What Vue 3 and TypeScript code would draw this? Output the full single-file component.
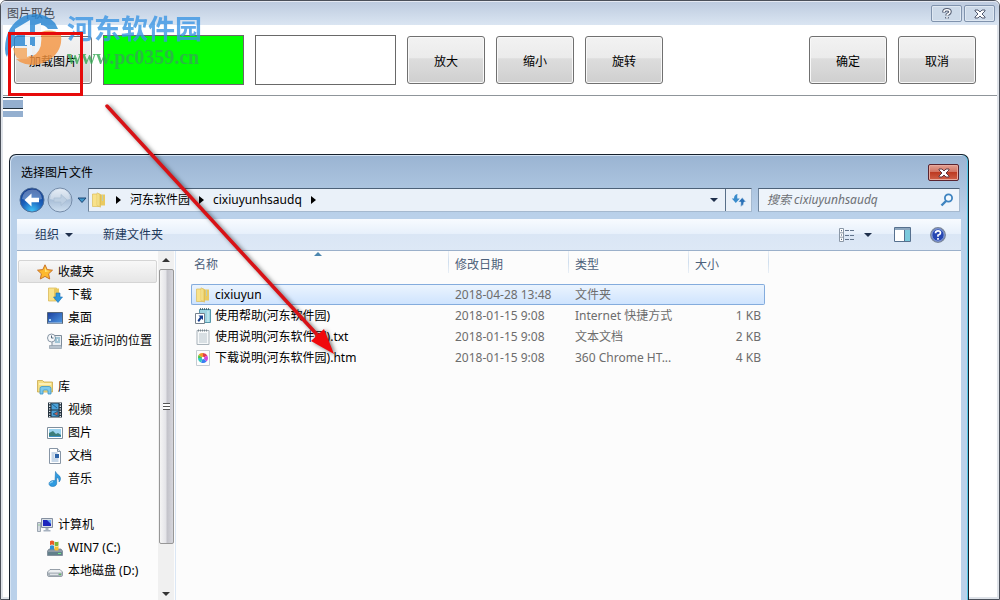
<script setup lang="ts">
import { ref } from 'vue'

interface NavItem {
  label: string
  icon: string
  root?: boolean
}
interface FileRow {
  name: string
  icon: string
  date: string
  type: string
  size: string
}

const groups: NavItem[][] = [
  [
    { label: '收藏夹', icon: 'star', root: true },
    { label: '下载', icon: 'download' },
    { label: '桌面', icon: 'desktop' },
    { label: '最近访问的位置', icon: 'recent' },
  ],
  [
    { label: '库', icon: 'library', root: true },
    { label: '视频', icon: 'video' },
    { label: '图片', icon: 'picture' },
    { label: '文档', icon: 'document' },
    { label: '音乐', icon: 'music' },
  ],
  [
    { label: '计算机', icon: 'computer', root: true },
    { label: 'WIN7 (C:)', icon: 'windisk' },
    { label: '本地磁盘 (D:)', icon: 'disk' },
  ],
]

const files: FileRow[] = [
  { name: 'cixiuyun', icon: 'folder', date: '2018-04-28 13:48', type: '文件夹', size: '' },
  { name: '使用帮助(河东软件园)', icon: 'shortcut', date: '2018-01-15 9:08', type: 'Internet 快捷方式', size: '1 KB' },
  { name: '使用说明(河东软件园).txt', icon: 'text', date: '2018-01-15 9:08', type: '文本文档', size: '2 KB' },
  { name: '下载说明(河东软件园).htm', icon: 'chrome', date: '2018-01-15 9:08', type: '360 Chrome HT...', size: '4 KB' },
]

const activeNav = ref('收藏夹')
const selected = ref('cixiuyun')
const query = ref('')
</script>

<template>
  <svg class="defs" aria-hidden="true">
    <defs>
      <linearGradient id="gold" x1="0" x2="1" y1="0" y2="0">
        <stop offset="0" stop-color="#fbeea6" /><stop offset="1" stop-color="#e5c85c" />
      </linearGradient>
      <linearGradient id="screen" x1="0" x2="1" y1="0" y2="1">
        <stop offset="0" stop-color="#1c3f9c" /><stop offset="1" stop-color="#4f9be6" />
      </linearGradient>
      <radialGradient id="orb" cx=".5" cy=".95" r=".9">
        <stop offset="0" stop-color="#3fc3f7" /><stop offset=".5" stop-color="#1b62bd" /><stop offset="1" stop-color="#123a8c" />
      </radialGradient>
      <linearGradient id="orbOff" x1="0" x2="0" y1="0" y2="1">
        <stop offset="0" stop-color="#dce7f3" /><stop offset=".5" stop-color="#a9bfd8" /><stop offset="1" stop-color="#cfe0f0" />
      </linearGradient>
    </defs>
    <symbol id="star" viewBox="0 0 16 16"><path d="M8 .8 10.2 5.6 15.5 6.2 11.6 9.8 12.7 15 8 12.4 3.3 15 4.4 9.8.5 6.2 5.8 5.6Z" fill="#fdb92e" stroke="#c9742a" /><path d="M8 3 9.4 6.6 13 7 8 8Z" fill="#ffe37c" /></symbol>
    <symbol id="folder" viewBox="0 0 16 16"><path d="M1.500 2h7v12.500h-7z" fill="#f8e28a" stroke="#d9b548" stroke-width=".6" /><path d="M8 2.500h6v11H8z" fill="#e9ca62" /><path d="M6 .8 9.500 2.500v12.700L6 13.500z" fill="url(#gold)" stroke="#d8b54e" stroke-width=".5" /><path d="M11.500 3v6" stroke="#b9cdbb" /></symbol>
    <symbol id="download" viewBox="0 0 16 16"><path d="M1.500 1h8v13h-8z" fill="#f8e28a" stroke="#d5b24a" stroke-width=".7" /><path d="M7 1.500h5v12H7z" fill="#e7c65c" /><path d="M9 6h4v4h2.500L11 15.500 6.500 10H9z" fill="#2e96dd" stroke="#1870b5" stroke-width=".6" /></symbol>
    <symbol id="desktop" viewBox="0 0 16 16"><path d="M.5 2.500h15v11H.5z" fill="url(#screen)" stroke="#55667a" /><path d="M1 13h14" stroke="#b7c8db" /><path d="M2 9h2v2H2z" fill="#a9d9f7" /></symbol>
    <symbol id="recent" viewBox="0 0 16 16"><path d="M5 2.500h9.500v11H5z" fill="#e9eef3" stroke="#7d8b99" /><circle cx="4.500" cy="5" r="4" fill="#f6f8fa" stroke="#8896a5" /><path d="M4.500 2.500V5h2" stroke="#55687b" fill="none" /><path d="M8 5h5M8 7h2m1 0h2M8 9h5" stroke="#5b9ab5" /><path d="M2.500 12.500h12v3h-12z" fill="#b6c2cd" stroke="#8291a0" stroke-width=".6" /></symbol>
    <symbol id="library" viewBox="0 0 16 16"><path d="M.5 13V1.500h5L7 3h8.500v10z" fill="#f4de83" stroke="#caa84a" stroke-width=".8" /><path d="M2 5h12" stroke="#fff6c7" stroke-width="1.500" /><path d="M3 15V9.500Q3 7.500 5 7.500h7q2 0 2 2V15h-3v-3q0-1-1-1H7q-1 0-1 1v3z" fill="#7cc9ec" stroke="#3b96c9" stroke-width=".8" /></symbol>
    <symbol id="video" viewBox="0 0 16 16"><path d="M1 .5h14v15H1z" fill="#25333f" /><path d="M4.500 1.500h7v6h-7zM4.500 8.500h7v6h-7z" fill="#4ca1d8" /><path d="M6 12 11 9v5zM5 2l5 4" fill="#bb6155" stroke="#1d638f" /><path d="M2.700 1v14M13.300 1v14" stroke="#e6edf2" stroke-width="1.300" stroke-dasharray="1.300 1.300" /></symbol>
    <symbol id="picture" viewBox="0 0 16 16"><path d="M.5 2.500h15v11H.5z" fill="#fff" stroke="#7f8f9d" /><path d="M2 4h12v8H2z" fill="#9bd3ef" /><path d="M2 8l4-2 3 3 2-1 3 2v2H2z" fill="#3b7d7a" /><path d="M2 11h12v1H2z" fill="#3a8fc4" /></symbol>
    <symbol id="document" viewBox="0 0 16 16"><path d="M2.500.5h8l3 3v12h-11z" fill="#fff" stroke="#8795a5" /><path d="M10.500.5v3h3" fill="#dde6ee" stroke="#8795a5" /><path d="M4.500 5h6M4.500 7h3M4.500 9h3M4.500 11h7M4.500 13h7" stroke="#8fb0d2" /><path d="M8 6h4v4H8z" fill="#2d64a8" /></symbol>
    <symbol id="music" viewBox="0 0 16 16"><path d="M8.500.5c.5 3 5 3.500 5 7 0 2-1 3-1.500 3.500.5-3-1-4-2.300-4.500v5.700c0 2-1.700 3.300-4 3.300S2 14.300 2 12.700s2-3.200 4.700-3.200l1.300.3z" fill="#2f9be0" stroke="#1b73b5" stroke-width=".6" /><path d="M3 12.500q1-2 3-1.800" stroke="#a8e0fa" fill="none" /></symbol>
    <symbol id="computer" viewBox="0 0 16 16"><path d="M4.500 1.500h11v9h-11z" fill="#d9dfe6" stroke="#8590a0" /><path d="M6 3h8v6H6z" fill="#1d25bd" /><path d="M10 3h4v4z" fill="#6faaf5" /><path d="M8.500 11h3v2h-3zM6.500 13h7v1.500h-7z" fill="#a6b1bf" /><path d="M.5 5.500h3v9h-3z" fill="#d3dae1" stroke="#8994a1" stroke-width=".8" /><path d="M1.500 8h1" stroke="#5cb85c" /></symbol>
    <symbol id="windisk" viewBox="0 0 16 16"><path d="M2 9h12l1.500 2v4.500H.5V11z" fill="#8c9aa6" stroke="#697987" stroke-width=".7" /><path d="M1 12h14v3H1z" fill="#62808b" /><path d="M11 13.500h3" stroke="#75ed87" /><path d="M3 1.200q2-1.200 4 0v4q-2-1.200-4 0z" fill="#eb5a28" /><path d="M7.500 1.500q2 1.200 4 0v4q-2 1.200-4 0z" fill="#7db53a" /><path d="M3 5.800q2-1.200 4 0v4q-2-1.200-4 0z" fill="#2e8fd4" /><path d="M7.500 6q2 1.200 4 0v4q-2 1.200-4 0z" fill="#f6c02e" /></symbol>
    <symbol id="disk" viewBox="0 0 16 16"><path d="M3 6.500h10L15.500 9v3q0 1.500-1.500 1.500H2Q.5 13.500.5 12V9z" fill="#edf0f2" stroke="#7f8a94" stroke-width=".8" /><path d="M1 9.500h14V12q0 1-1 1H2q-1 0-1-1z" fill="#a9b2ba" /><path d="M3 11.300h8" stroke="#eef1f3" /><path d="M12 11.300h2" stroke="#45c445" /></symbol>
    <symbol id="shortcut" viewBox="0 0 16 16"><path d="M4.500 1.500h11v13h-11z" fill="#9dd5e2" stroke="#5697ab" /><path d="M5 1h10" stroke="#35535f" stroke-width="1.500" stroke-dasharray="1 1" /><path d="M13 3v11" stroke="#d6f1f5" /><path d="M.5 5.500h9v10h-9z" fill="#fff" stroke="#76828d" /><path d="M3.500 7.500H8V12L6.500 10.500 4 14 2.500 12.500 5 9z" fill="#173f8f" /></symbol>
    <symbol id="text" viewBox="0 0 16 16"><path d="M2 1.500h12v14H2z" fill="#f7f9fa" stroke="#a9b3ba" /><path d="M3 1.500h10" stroke="#7c878d" stroke-width="2" stroke-dasharray="1 1" /><path d="M4 5h8M4 7h8M4 9h8M4 11h8M4 13h8" stroke="#b9c5cc" /></symbol>
    <symbol id="chrome" viewBox="0 0 16 16"><path d="M1.500.5h13v15h-13z" fill="#fdfdfd" stroke="#c5ccd3" /><path d="M8 8 3.500 5Q5 2.500 8 3z" fill="#f29b2f" /><path d="M8 8V3q3 0 4.300 2.500z" fill="#e23d4c" /><path d="m8 8 4.300-2.500Q14 9 11.500 11.500z" fill="#d04be0" /><path d="m8 8 3.500 3.500Q9 14 6 12.500z" fill="#3a7ef2" /><path d="m8 8-2 4.500Q3 11 3 8z" fill="#31c8c0" /><path d="M8 8H3q0-2 .5-3z" fill="#52c444" /><circle cx="8" cy="8" r="1.200" fill="#fff" /></symbol>
  </svg>

  <main class="window">
    <header class="titlebar">
      <h1>图片取色</h1>
      <div class="caption">
        <button aria-label="帮助"><svg width="12" height="14" viewBox="0 0 12 14"><path d="M3 5.500V4.800q0-2 3-2t3 2q0 1.200-1.500 2Q6 7.500 6 8.500M6 10v1.500" fill="none" stroke="#525b70" stroke-width="3.600" /><path d="M3 5V4.800q0-2 3-2t3 2q0 1.200-1.500 2Q6 7.500 6 8.500M6 10v1.500" fill="none" stroke="#fff" stroke-width="1.500" /></svg></button>
        <button aria-label="关闭"><svg width="12" height="10" viewBox="0 0 12 10"><path d="M1 1h3l2 2 2-2h3v1L8 5l3 3v1H8L6 7 4 9H1V8l3-3-3-3z" fill="#fff" stroke="#525b70" /></svg></button>
      </div>
    </header>

    <section class="toolbar">
      <button class="push">加载图片</button>
      <div class="swatch green"></div>
      <div class="swatch"></div>
      <button class="push">放大</button>
      <button class="push">缩小</button>
      <button class="push">旋转</button>
      <span class="grow"></span>
      <button class="push">确定</button>
      <button class="push">取消</button>
    </section>
    <div class="stripes"></div>
  </main>

  <section class="dialog" aria-label="选择图片文件">
    <header class="dialog-title">
      <h2>选择图片文件</h2>
      <button class="close" aria-label="关闭"><svg width="12" height="10" viewBox="0 0 12 10"><path d="M1 1h3l2 2 2-2h3v1L8 5l3 3v1H8L6 7 4 9H1V8l3-3-3-3z" fill="#fff" stroke="#5f3a44" /></svg></button>
    </header>

    <div class="address-row">
      <button class="orb" aria-label="后退"><svg width="26" height="26" viewBox="0 0 26 26"><circle cx="13" cy="13" r="12" fill="url(#orb)" stroke="#4b6d98" /><path d="M3 12Q4 3 13 2.500T23 12Q13 15 3 12" fill="#fff" opacity=".3" /><path d="m5.500 13 7-6.500v4.300h7.500v4.400h-7.500v4.300z" fill="#fff" /></svg></button>
      <button class="orb" aria-label="前进"><svg width="26" height="26" viewBox="0 0 26 26"><circle cx="13" cy="13" r="12" fill="url(#orbOff)" stroke="#758ca9" /><path d="M3 12Q4 3 13 2.500T23 12Q13 15 3 12" fill="#fff" opacity=".35" /><path d="m20 13-6-5.500v3.500H7v4h7v3.500z" fill="#bdcfe2" stroke="#a9bdd3" stroke-width=".7" /></svg></button>
      <button class="recent" aria-label="最近的页面"><svg width="10" height="7" viewBox="0 0 10 7"><path d="M1 1h8L5 5.500z" fill="#3f97cb" stroke="#1d4774" /></svg></button>
      <nav class="address" aria-label="路径">
        <svg width="16" height="18"><use href="#folder" /></svg>
        <i class="tri right"></i>
        <a href="#">河东软件园</a>
        <i class="tri right"></i>
        <a href="#">cixiuyunhsaudq</a>
        <i class="tri right"></i>
        <span class="grow"></span>
        <button aria-label="历史路径"><i class="tri down"></i></button>
        <button class="refresh" aria-label="刷新"><svg width="16" height="16" viewBox="0 0 16 16"><path d="M6.500 2Q3 2.500 3 6.500H.8L4.800 11l4-4.500H6.300Q6 4 6.500 2Z" fill="#3a8ccc" /><path d="M9.500 14.500q3.500-.5 3.500-4.500h2.200l-4-4.500-4 4.500h2.500q.3 2.500-.2 4.500Z" fill="#2b72b8" stroke="#eaf1f9" stroke-width=".6" /></svg></button>
      </nav>
      <label class="search">
        <input v-model="query" type="text" placeholder="搜索 cixiuyunhsaudq" aria-label="搜索" />
        <svg width="14" height="14" viewBox="0 0 14 14"><circle cx="8.500" cy="5" r="3.600" fill="#f2f9ff" stroke="#3e83c0" stroke-width="1.800" /><path d="m6 8-4.500 4.500" stroke="#3e83c0" stroke-width="2.400" /></svg>
      </label>
    </div>

    <div class="commands">
      <button>组织 <i class="tri down"></i></button>
      <button>新建文件夹</button>
      <span class="grow"></span>
      <button class="view" aria-label="更改视图"><svg width="17" height="14" viewBox="0 0 17 14"><path d="M.5.500h4v13h-4zM.5 4.800h4M.5 9.200h4" fill="#fff" stroke="#8a97a6" /><path d="M2 2.700h1M2 7h1M2 11.300h1" stroke="#334b69" /><path d="M6 2.500h10M6 7.500h10M6 11.500h10" stroke="#63758c" stroke-dasharray="4 1" /></svg><i class="tri down"></i></button>
      <button aria-label="预览窗格"><svg width="17" height="15" viewBox="0 0 17 15"><path d="M.5.500h16v14H.5z" fill="#fff" stroke="#56708e" /><path d="M1 2h15" stroke="#8da6be" stroke-width="2" /><path d="M11 3h5v11h-5z" fill="#7bc9dc" /><path d="M10.500 3v11" stroke="#56708e" /></svg></button>
      <button aria-label="获取帮助"><svg width="16" height="16" viewBox="0 0 16 16"><circle cx="8" cy="8" r="7.300" fill="#2647b2" stroke="#7c8798" stroke-width="1.300" /><circle cx="8" cy="8" r="6.200" fill="none" stroke="#b5c7e8" stroke-width=".8" /><path d="M5.500 6.300q0-2.500 2.500-2.500t2.500 2.200Q10.500 7.400 8 8.200v1.600M8 11v1.800" stroke="#fff" stroke-width="1.700" fill="none" /></svg></button>
    </div>

    <div class="body">
      <nav class="tree" aria-label="导航窗格">
        <ul v-for="(group, g) in groups" :key="g">
          <li v-for="item in group" :key="item.label">
            <button :class="{ root: item.root, active: item.label === activeNav }" @click="activeNav = item.label">
              <svg width="16" height="16"><use :href="'#' + item.icon" /></svg>{{ item.label }}
            </button>
          </li>
        </ul>
      </nav>
      <div class="scroll">
        <i class="tri up"></i>
        <div class="thumb"><span></span></div>
        <div class="rest"></div>
        <i class="tri down"></i>
      </div>
      <div class="files">
        <table>
          <thead>
            <tr><th class="name">名称<i class="sort"></i></th><th class="date">修改日期</th><th class="date">类型</th><th class="last">大小</th></tr>
          </thead>
          <tbody>
            <tr v-for="f in files" :key="f.name" :class="{ selected: f.name === selected }" @click="selected = f.name">
              <td><div class="file"><svg width="16" height="16"><use :href="'#' + f.icon" /></svg>{{ f.name }}</div></td>
              <td>{{ f.date }}</td>
              <td>{{ f.type }}</td>
              <td class="size">{{ f.size }}</td>
            </tr>
          </tbody>
        </table>
      </div>
    </div>
  </section>

  <div class="watermark">
    <svg width="60" height="58" viewBox="0 0 60 58">
      <path d="M0 37Q0 14 19 4 38-2 50 11L53 17H43Q40 13 36 13V34H8Q4 38 2 45Q0 42 0 37Z" fill="#2585d3" />
      <path d="M10 17 25 8V33H20V20L10 24Z" fill="#eef5fb" />
      <path d="M25 20H30V13L36 11V40H30V25H25Z" fill="#eef5fb" />
      <path d="M36 20Q48 16 56 23 58 39 44 48 29 57 15 50L11 47Q22 48 31 42 38 36 36 20Z" fill="#f5943f" />
      <path d="M8 36H26V45Q18 49 12 46Q9 42 8 36Z" fill="#f5a65a" />
      <path d="M22 36V33H27V43L22 45Z" fill="#eef5fb" />
    </svg>
    <div class="brand"><strong>河东软件园</strong><span>www.pc0359.cn</span></div>
  </div>
  <div class="highlight"></div>
  <svg class="pointer" width="240" height="260" viewBox="0 0 240 260" aria-hidden="true">
    <path d="M6 5 221 239" stroke="#d81216" stroke-width="3.500" stroke-linecap="round" />
    <path d="m233 253-23-13 13-12z" fill="#f0080c" />
  </svg>
</template>

<style>
html, body, #app { height: 100%; }
body { margin: 0; overflow: hidden; }
#app { position: relative; }
</style>

<style scoped>
* { box-sizing: border-box; }
.defs { position: absolute; width: 0; height: 0; }
.window, .dialog, button, input {
  font-family: "Noto Sans", "Noto Sans CJK SC", sans-serif;
  font-size: 12px;
  line-height: 16px;
}
button { border: 0; padding: 0; background: none; color: inherit; }
h1, h2 { margin: 0; font-size: 12px; font-weight: 400; }
svg { display: block; flex: none; }
.grow { flex: 1; }

.window {
  height: 100%;
  border: 1px solid #4b505a;
  border-radius: 6px 6px 0 0;
  padding: 0 2px 2px;
  background: #dfe3e9;
  display: flex;
  flex-direction: column;
}
.titlebar {
  flex: none;
  height: 24px;
  margin: 0 -2px;
  padding: 1px 4px 0 6px;
  border-radius: 5px 5px 0 0;
  background: linear-gradient(#bccade, #dae5f2);
  box-shadow: inset 0 1px #e5e9f2;
  display: flex;
  justify-content: space-between;
  align-items: center;
  color: #454b55;
}
.caption { display: flex; gap: 2px; }
.caption button {
  width: 31px;
  height: 17px;
  border: 1px solid #8093ad;
  border-radius: 2px;
  background: #cddae9;
  box-shadow: inset 0 0 0 1px #dfe8f2;
  display: grid;
  place-items: center;
}
.toolbar {
  flex: none;
  display: flex;
  align-items: center;
  gap: 11px;
  height: 71px;
  padding: 0 21px 0 11px;
  background: #fff;
  border-bottom: 1px solid #8f959a;
}
.push {
  width: 78px;
  height: 48px;
  padding-top: 3px;
  border: 1px solid #707070;
  border-radius: 3px;
  background: linear-gradient(#f2f2f2, #ebebeb 46%, #dddddd 47%, #cfcfcf);
  box-shadow: inset 0 0 0 1px #f8f8f8;
  color: #000;
}
.swatch { width: 141px; height: 50px; border: 1px solid #696969; background: #fff; }
.green { background: #0f0; }
.stripes {
  flex: 1;
  background:
    linear-gradient(#fff 1px, #22303c 1px 2px, #fff 2px 4px, #94afcf 4px 12px, #22303c 12px 13px, #fff 13px 15px, #94afcf 15px 21px, #fff 21px) 0 0 / 20px 22px no-repeat #fff;
}

.dialog {
  position: absolute;
  top: 154px;
  left: 9px;
  right: 31px;
  bottom: 0;
  border: 1px solid #16202c;
  border-bottom: 0;
  border-radius: 7px 7px 0 0;
  padding: 0 7px;
  background: linear-gradient(#9ab4d2, #bad1ea 60px);
  box-shadow: inset -1px 0 #56c9e8, inset 1px 1px #d4e3f3;
  display: flex;
  flex-direction: column;
  color: #000;
}
.dialog-title {
  height: 32px;
  padding: 3px 2px 0 4px;
  display: flex;
  align-items: center;
  justify-content: space-between;
}
.close {
  width: 31px;
  height: 17px;
  border: 1px solid #5a2430;
  border-radius: 2px;
  background: linear-gradient(#e2a193, #d0705f 48%, #bd3a22 50%, #cf6048);
  box-shadow: inset 0 0 0 1px #e8a99c;
  display: grid;
  place-items: center;
}
.address-row { display: flex; align-items: center; height: 26px; padding: 0 1px 0 2px; }
.orb { margin-right: 2px; }
.recent { width: 13px; height: 20px; display: grid; place-items: center; }
.address {
  flex: 1;
  height: 24px;
  margin-right: 6px;
  padding-left: 2px;
  border: 1px solid #5f7892;
  border-color: #4c6178 #a5b9cf #a5b9cf #6f859d;
  background: #eaf1f9;
  display: flex;
  align-items: center;
}
.address a { color: #000; text-decoration: none; }
.address button { width: 22px; height: 22px; display: grid; place-items: center; }
.address .refresh { width: 26px; border-left: 1px solid #586f89; }
.tri { display: inline-block; flex: none; width: 0; height: 0; border: 4px solid transparent; }
.tri.right { margin: 0 9px 0 9px; border-width: 4px 0 4px 5px; border-left-color: #000; }
.tri.down { border-width: 4px 4px 0; border-top-color: #1e2f4b; }
.tri.up { border-width: 0 4px 4px; border-bottom-color: #333; }
.search {
  width: 202px;
  height: 24px;
  padding: 0 5px 0 8px;
  border: 1px solid #a5b9cf;
  border-color: #4c6178 #a5b9cf #a5b9cf #6f859d;
  background: #eef4fb;
  display: flex;
  align-items: center;
}
.search input { flex: 1; min-width: 0; border: 0; padding: 0; outline: 0; background: none; }
.search input::placeholder { color: #6d7075; font-style: italic; opacity: 1; }
.commands {
  flex: none;
  height: 32px;
  margin-top: 6px;
  padding: 0 15px 0 18px;
  border-bottom: 1px solid #9bb0ca;
  background: linear-gradient(#f8fbff, #e7f0fb 48%, #dae6f5 50%, #dde8f6);
  display: flex;
  align-items: center;
  color: #1e395b;
}
.commands button { display: flex; align-items: center; gap: 6px; margin-right: 30px; }
.commands .view { gap: 8px; margin-right: 22px; }
.commands .grow ~ button:nth-last-child(2) { margin-right: 19px; }
.commands button:last-child { margin-right: 0; }

.body { flex: 1; min-height: 0; display: flex; background: #fcfcfc; }
.tree { flex: none; width: 141px; padding: 9px 0 0 1px; overflow: hidden; }
.tree ul { margin: 0 0 23px; padding: 0; list-style: none; }
.tree button {
  width: 139px;
  height: 23px;
  padding-left: 28px;
  border: 1px solid transparent;
  border-radius: 2px;
  display: flex;
  align-items: center;
  gap: 5px;
  white-space: nowrap;
}
.tree .root { padding-left: 18px; }
.tree .active { border-color: #d5d5d5; background: linear-gradient(#f8f8f8, #e6e6e6); }
.scroll {
  flex: none;
  width: 16px;
  padding: 7px 0 4px;
  background: #f0f0f0;
  display: flex;
  flex-direction: column;
  align-items: center;
}
.scroll .tri.down { border-top-color: #333; }
.thumb {
  flex: 275;
  width: 15px;
  margin-top: 7px;
  border: 1px solid #979797;
  border-radius: 2px;
  background: linear-gradient(90deg, #f5f5f5, #e4e4e8 45%, #c3c3ca 55%, #d6d6dc);
  display: grid;
  place-items: center;
}
.thumb span { width: 7px; height: 7px; background: repeating-linear-gradient(#555 0 1px, #fff 1px 3px); }
.rest { flex: 48; }
.files { flex: 1; margin-left: 1px; padding-left: 15px; border-left: 1px solid #dbe7f5; }
table { width: 574px; table-layout: fixed; border-collapse: separate; border-spacing: 0; }
th {
  position: relative;
  height: 33px;
  padding: 6px 0 0 6px;
  text-align: left;
  vertical-align: top;
  font-weight: 400;
  color: #4c607a;
}
th::after {
  content: "";
  position: absolute;
  top: 0;
  right: 0;
  width: 1px;
  height: 22px;
  background: linear-gradient(#e9eff6, #cfdeee, #e9eff6);
}
.name { width: 258px; padding-left: 3px; }
.date { width: 120px; }
.last::after { right: -4px; }
.sort {
  position: absolute;
  top: 1px;
  left: 50%;
  margin-left: -6px;
  border: 4px solid transparent;
  border-width: 0 4px 4px;
  border-bottom-color: #4c86ae;
}
td {
  height: 21px;
  padding: 0 0 0 6px;
  border: 1px solid transparent;
  border-width: 1px 0;
  line-height: 16px;
  color: #6d6d6d;
  white-space: nowrap;
}
td:first-child { padding-left: 3px; border-left-width: 1px; color: #000; }
td:last-child { border-right-width: 1px; }
.size { padding-right: 3px; text-align: right; }
.file { display: flex; align-items: center; gap: 4px; }
.selected td { border-color: #84acdd; background: linear-gradient(#ebf4fe, #cfe4fe); }
.selected td:first-child { border-radius: 2px 0 0 2px; }
.selected td:last-child { border-radius: 0 2px 2px 0; }

.watermark {
  position: absolute;
  top: 12px;
  left: 5px;
  display: flex;
  gap: 2px;
  opacity: .8;
  pointer-events: none;
}
.brand { display: flex; flex-direction: column; }
.brand strong {
  font: 700 27px/32px "Noto Sans CJK SC", sans-serif;
  color: #3c96e4;
}
.brand span {
  font: 700 20px/26px "Liberation Serif", serif;
  color: #34a853;
}
.highlight {
  position: absolute;
  top: 32px;
  left: 8px;
  width: 75px;
  height: 64px;
  border: 3px solid #e60a0a;
  pointer-events: none;
}
.pointer {
  position: absolute;
  top: 101px;
  left: 101px;
  filter: drop-shadow(2px 1px 2px #0008);
  pointer-events: none;
}
</style>
